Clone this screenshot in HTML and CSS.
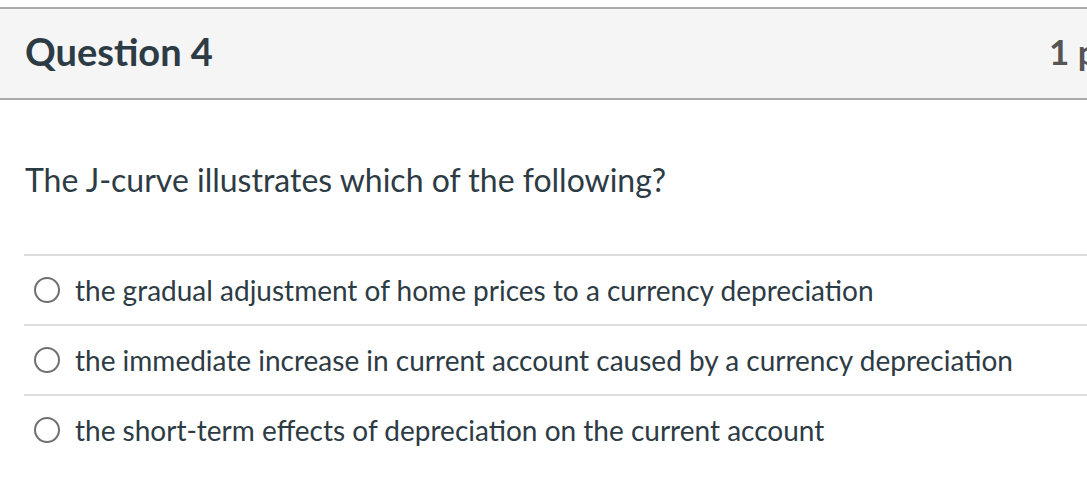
FILE: index.html
```html
<!DOCTYPE html>
<html lang="en">
<head>
<meta charset="utf-8">
<title>Question 4</title>
<link rel="stylesheet" href="styles.css">
</head>
<body>
<div class="question">
  <div class="header">
    <h2 class="title">Question 4</h2>
    <span class="points">1 pts</span>
  </div>
  <div class="content">
    <p class="prompt">The J-curve illustrates which of the following?</p>
    <div class="answers">
      <label class="answer"><span class="radio"></span><span class="answer-text">the gradual adjustment of home prices to a currency depreciation</span></label>
      <label class="answer"><span class="radio"></span><span class="answer-text">the immediate increase in current account caused by a currency depreciation</span></label>
      <label class="answer"><span class="radio"></span><span class="answer-text">the short-term effects of depreciation on the current account</span></label>
    </div>
  </div>
</div>
</body>
</html>
```

FILE: styles.css
```css
html, body {
  margin: 0;
  padding: 0;
  background: #ffffff;
  overflow: hidden;
}
body {
  font-family: Lato, "Noto Sans", sans-serif;
  color: #2d3b45;
}
.question {
  width: 1160px;
  margin-top: 7px;
}
.header {
  display: grid;
  grid-template-columns: 1024px auto;
  align-items: center;
  height: 83px;
  background: #f5f5f5;
  border-top: 2px solid #aaaaaa;
  border-bottom: 2px solid #aaaaaa;
  padding: 0 0 6px 25px;
}
.title {
  margin: 0;
  font-size: 38px;
  font-weight: 700;
}
.points {
  font-size: 35px;
  font-weight: 700;
  color: #555555;
  white-space: nowrap;
}
.content {
  padding: 0 0 0 24px;
}
.prompt {
  margin: 0;
  padding: 62px 0 56px 1px;
  font-size: 32px;
  line-height: 36px;
}
.answers {
  border-top: 2px solid #dddddd;
}
.answer {
  display: flex;
  align-items: center;
  gap: 15px;
  height: 68px;
  padding-left: 10px;
  border-bottom: 2px solid #dddddd;
}
.answer:last-child {
  border-bottom: none;
}
.radio {
  flex: none;
  width: 22px;
  height: 22px;
  border: 2px solid #707070;
  border-radius: 50%;
}
.answer-text {
  font-size: 28px;
}
```
